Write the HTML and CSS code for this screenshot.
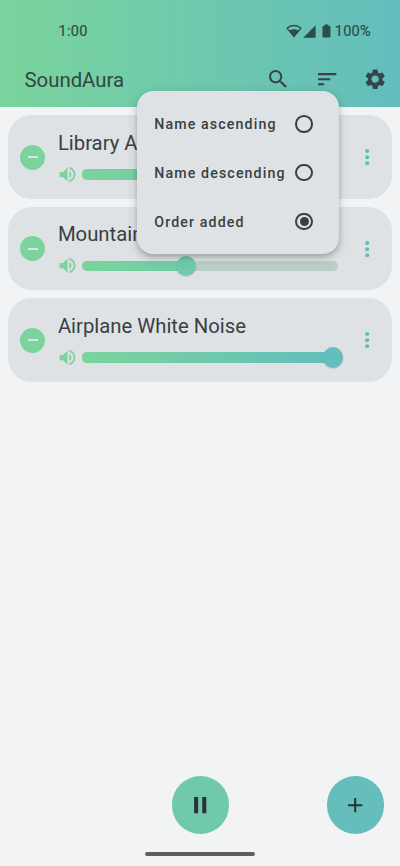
FILE: index.html
```html
<!DOCTYPE html>
<html lang="en">
<head>
<meta charset="utf-8">
<title>SoundAura</title>
<link rel="stylesheet" href="styles.css">
</head>
<body>
<svg class="defs" width="0" height="0" aria-hidden="true">
  <symbol id="volume" viewBox="0 0 24 24"><path d="M3 9v6h4l5 5V4L7 9H3zm13.500 3c0-1.770-1.020-3.290-2.500-4.030v8.050c1.480-.730 2.500-2.250 2.500-4.020zM14 3.230v2.060c2.890.860 5 3.540 5 6.710s-2.110 5.850-5 6.710v2.060c4.010-.910 7-4.490 7-8.770s-2.990-7.860-7-8.770z"/></symbol>
  <symbol id="more" viewBox="0 0 24 24"><path d="M12 8c1.100 0 2-.9 2-2s-.9-2-2-2-2 .9-2 2 .9 2 2 2zm0 2c-1.100 0-2 .9-2 2s.9 2 2 2 2-.9 2-2-.9-2-2-2zm0 6c-1.100 0-2 .9-2 2s.9 2 2 2 2-.9 2-2-.9-2-2-2z"/></symbol>
</svg>
<div class="screen">
  <header class="header">
    <div class="status">
      <span class="clock">1:00</span>
      <div class="indicators">
        <svg class="wifi" width="16" height="14" viewBox="0 0 16 14"><path d="M1 4.200C4.800.600 11.200.600 15 4.200L8 12.500Z" fill="none" stroke="currentColor" stroke-width="1.300" stroke-linejoin="round"/><path d="M3 6.800C6 4.800 10 4.800 13 6.800L8 12.800Z"/></svg>
        <svg class="signal" width="13" height="13" viewBox="0 0 13 13"><path d="M12.600.200V12.800H.200Z"/></svg>
        <svg class="battery" width="9" height="14" viewBox="0 0 9 14"><path d="M2.500.500h4V2H7.500q1 0 1 1V12.500q0 1-1 1H1.500q-1 0-1-1V3q0-1 1-1h1Z"/></svg>
        <span>100%</span>
      </div>
    </div>
    <div class="toolbar">
      <h1>SoundAura</h1>
      <div class="actions">
        <svg viewBox="0 0 24 24"><path d="M15.500 14h-.790l-.280-.270C15.410 12.590 16 11.110 16 9.500 16 5.910 13.090 3 9.500 3S3 5.910 3 9.500 5.910 16 9.500 16c1.610 0 3.090-.590 4.230-1.570l.270.280v.790l5 4.990L20.490 19l-4.990-5zm-6 0C7.010 14 5 11.990 5 9.500S7.010 5 9.500 5 14 7.010 14 9.500 11.990 14 9.500 14z"/></svg>
        <svg viewBox="0 0 24 24"><path d="M3 18h6v-2H3v2zM3 6v2h18V6H3zm0 7h12v-2H3v2z"/></svg>
        <svg viewBox="0 0 24 24"><path d="M19.140 12.940c.04-.3.06-.61.06-.94 0-.32-.02-.64-.07-.94l2.030-1.580c.18-.14.23-.41.12-.61l-1.920-3.320c-.12-.22-.37-.29-.59-.22l-2.390.96c-.5-.38-1.030-.7-1.620-.94l-.36-2.540c-.04-.24-.24-.41-.48-.41h-3.840c-.24 0-.43.17-.47.41l-.36 2.540c-.59.24-1.130.57-1.620.94l-2.390-.96c-.22-.08-.47 0-.59.22L2.740 8.870c-.12.21-.08.47.12.61l2.030 1.580c-.05.3-.09.63-.09.94s.02.64.07.94l-2.030 1.580c-.18.14-.23.41-.12.61l1.920 3.320c.12.22.37.29.59.22l2.390-.96c.5.38 1.030.7 1.620.94l.36 2.540c.05.24.24.41.48.41h3.840c.24 0 .44-.17.47-.41l.36-2.540c.59-.24 1.130-.56 1.620-.94l2.390.96c.22.08.47 0 .59-.22l1.920-3.320c.12-.22.07-.47-.12-.61l-2.010-1.580zM12 15.600c-1.980 0-3.600-1.620-3.600-3.600s1.620-3.600 3.600-3.600 3.600 1.620 3.600 3.600-1.620 3.600-3.600 3.600z"/></svg>
      </div>
    </div>
  </header>

  <main class="tracks">
    <section class="track">
      <div class="remove"></div>
      <div class="body">
        <h2>Library A</h2>
        <div class="volume"><svg class="speaker"><use href="#volume"/></svg><div class="slider"><div class="fill fill-short"></div></div></div>
      </div>
      <svg class="more"><use href="#more"/></svg>
    </section>
    <section class="track">
      <div class="remove"></div>
      <div class="body">
        <h2>Mountain</h2>
        <div class="volume"><svg class="speaker"><use href="#volume"/></svg><div class="slider"><div class="fill fill-mid"></div><div class="thumb thumb-mid"></div></div></div>
      </div>
      <svg class="more"><use href="#more"/></svg>
    </section>
    <section class="track">
      <div class="remove"></div>
      <div class="body">
        <h2>Airplane White Noise</h2>
        <div class="volume"><svg class="speaker"><use href="#volume"/></svg><div class="slider"><div class="fill fill-full"></div><div class="thumb thumb-full"></div></div></div>
      </div>
      <svg class="more"><use href="#more"/></svg>
    </section>
  </main>

  <footer class="footer">
    <div class="fabs">
      <div class="fab pause"><svg viewBox="0 0 24 24"><path d="M6 20h4V4H6v16zm8-16v16h4V4h-4z"/></svg></div>
      <div class="fab add"><svg viewBox="0 0 24 24"><path d="M19 13h-6v6h-2v-6H5v-2h6V5h2v6h6v2z"/></svg></div>
    </div>
    <div class="home"></div>
  </footer>

  <div class="menu">
    <div class="option"><span>Name ascending</span><i class="radio"></i></div>
    <div class="option"><span>Name descending</span><i class="radio"></i></div>
    <div class="option"><span>Order added</span><i class="radio checked"></i></div>
  </div>
</div>
</body>
</html>
```

FILE: styles.css
```css
* { box-sizing: border-box; }
body { margin: 0; background: #f1f3f5; font-family: Roboto, sans-serif; color: #393f43; }
svg { display: block; fill: currentColor; flex: none; }
h1, h2 { margin: 0; font-weight: 400; white-space: nowrap; }
.defs { position: absolute; }
.screen { position: relative; height: 866px; display: flex; flex-direction: column; overflow: hidden; }

.header { height: 107px; flex: none; background: linear-gradient(90deg, #7ad49c, #63bdbd); }
.status { height: 54px; padding: 8px 29px 0 58.5px; display: flex; align-items: center; justify-content: space-between; color: #2b4e49; font-size: 14.5px; font-weight: 400; letter-spacing: 0.3px; -webkit-text-stroke: 0.2px currentColor; }
.indicators { display: flex; align-items: center; }
.signal { margin-left: 0.5px; }
.battery { margin-left: 6px; margin-right: 4px; }
.toolbar { height: 50px; padding: 0 12.3px 0 24.5px; display: flex; align-items: center; justify-content: space-between; }
.toolbar h1 { font-size: 20.35px; line-height: 24px; color: #32463f; padding-top: 2px; }
.actions { display: flex; gap: 24.4px; color: #33464a; }
.actions svg { width: 24.4px; height: 24.4px; }

.tracks { padding: 8.3px 8px 0; display: flex; flex-direction: column; gap: 8.2px; flex: 1; }
.track { height: 83.3px; flex: none; border-radius: 24px; background: #dee2e5; display: flex; align-items: center; padding: 0 12px; }
.remove { width: 25px; height: 25px; flex: none; border-radius: 50%; background: #7ad49c; display: flex; align-items: center; justify-content: center; margin-top: 1px; }
.remove::after { content: ""; width: 10px; height: 2px; background: #dee2e5; }
.body { margin-left: 12.9px; width: 281px; flex: none; }
.body h2 { font-size: 20.3px; line-height: 28px; }
.volume { display: flex; align-items: center; margin: 7px 0 0 -1.4px; height: 21px; }
.speaker { width: 21px; height: 21px; color: #7ad49c; }
.slider { position: relative; width: 255.6px; height: 10.2px; margin-left: 4.8px; border-radius: 5px; background: #b9cec7; }
.fill { height: 100%; border-radius: 5px; background: linear-gradient(90deg, #7ad49c, #63bdbd) 0 0 / 256px 100%; }
.fill-short { width: 60px; }
.fill-mid { width: 104px; }
.fill-full { width: 251px; }
.thumb { position: absolute; top: -5.2px; width: 20.6px; height: 20.6px; border-radius: 50%; box-shadow: 0 1px 1px rgba(0, 0, 0, .12); }
.thumb-mid { left: 93.4px; background: #70c9aa; }
.thumb-full { left: 240.4px; background: #64bebc; }
.more { width: 24.4px; height: 24.4px; margin: 1px 0 0 16.4px; color: #5fbdb9; }

.footer { flex: none; height: 90px; }
.fabs { display: flex; justify-content: space-between; padding: 0.4px 16.2px 0 171.5px; height: 75.5px; }
.fab { width: 57.2px; height: 57.2px; border-radius: 50%; display: flex; align-items: center; justify-content: center; color: #2b3134; }
.fab svg { width: 24.4px; height: 24.4px; }
.pause { background: #70c9ad; }
.add { background: #65bebb; }
.home { width: 110px; height: 4.2px; margin: 0 auto; border-radius: 3px; background: #5c5e60; }

.menu { position: absolute; left: 137.3px; top: 91.2px; width: 201.7px; height: 162.8px; padding: 8.2px 26px 8px 17px; border-radius: 16.3px; background: #dee2e5; box-shadow: 0 3px 5px rgba(0, 0, 0, .18), 0 3px 12px rgba(0, 0, 0, .14); }
.option { height: 48.9px; display: flex; align-items: center; justify-content: space-between; font-size: 14.2px; font-weight: 500; letter-spacing: 1.12px; white-space: nowrap; }
.radio { width: 17.5px; height: 17.5px; flex: none; border: 2px solid #393f43; border-radius: 50%; display: flex; align-items: center; justify-content: center; }
.checked::after { content: ""; width: 9px; height: 9px; flex: none; border-radius: 50%; background: #393f43; }
```
